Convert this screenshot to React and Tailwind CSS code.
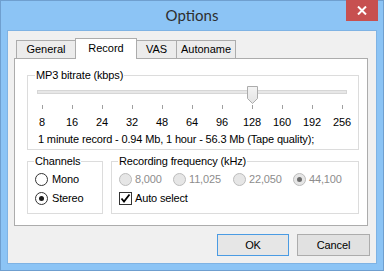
import React from "react";

const Radio = ({ checked, disabled }) => (
  <span
    className={
      "w-[13px] h-[13px] rounded-full border flex items-center justify-center shrink-0 " +
      (disabled ? "border-[#bcbcbc] bg-[#e6e6e6]" : "border-[#333333] bg-white")
    }
  >
    {checked && (
      <span className={"w-[5px] h-[5px] rounded-full " + (disabled ? "bg-[#6d6d6d]" : "bg-[#1a1a1a]")} />
    )}
  </span>
);

const labels = ["8", "16", "24", "32", "48", "64", "96", "128", "160", "192", "256"];

export default function App() {
  return (
    <div className="w-[384px] h-[271px] bg-[#8cc4f5] border border-[#6f9fcf] flex flex-col font-['Liberation_Sans',Arial,sans-serif] text-[11px] tracking-[-0.15px] text-black">
      <div className="relative h-[29px] flex items-center justify-center">
        <span className="font-['Lato',sans-serif] text-[15px] tracking-normal text-[#2e2e2e] leading-none">Options</span>
        <div className="absolute top-[-1px] right-[5px] w-[32px] h-[21px] bg-[#c75050] flex items-center justify-center">
          <svg width="10" height="9" viewBox="0 0 10 9">
            <path d="M1 0.5 L9 8.5 M9 0.5 L1 8.5" stroke="white" strokeWidth="2" />
          </svg>
        </div>
      </div>
      <div className="mx-[6px] h-[234px] border border-[#7fb3e4] bg-[#f0f0f0] flex flex-col px-[6px] pt-[7px]">
        <div className="flex items-start h-[20px] ml-[2px] tracking-normal">
          <div className="mt-[2px] h-[18px] w-[59px] border-t border-l border-[#acacac] bg-[#ececec] flex items-center justify-center leading-none">General</div>
          <div className="relative z-10 h-[21px] w-[62px] border-t border-l border-r border-[#acacac] bg-white flex items-start justify-center pt-[4px] leading-none">Record</div>
          <div className="mt-[2px] h-[18px] w-[40px] border-t border-r border-[#acacac] bg-[#ececec] flex items-center justify-center leading-none">VAS</div>
          <div className="mt-[2px] h-[18px] w-[59px] border-t border-r border-[#acacac] bg-[#ececec] flex items-center justify-center leading-none">Autoname</div>
        </div>
        <div className="w-[354px] h-[168px] border border-[#acacac] bg-white pl-[12px] flex flex-col">
          <fieldset className="mt-[10px] w-[332px] border border-[#dcdcdc] p-0 m-0 min-w-0 flex flex-col">
            <legend className="ml-[7px] px-[1px] leading-[13px]">MP3 bitrate (kbps)</legend>
            <div className="relative mt-[4px] h-[18px]">
              <div className="absolute left-[9px] top-[4px] w-[310px] h-[4px] border border-[#d6d6d6] bg-[#e7e7e7]" />
              <svg className="absolute left-[219px] top-0" width="11" height="18" viewBox="0 0 11 18">
                <defs>
                  <linearGradient id="tg" x1="0" y1="0" x2="0" y2="1">
                    <stop offset="0" stopColor="#f4f4f4" />
                    <stop offset="1" stopColor="#e3e3e3" />
                  </linearGradient>
                </defs>
                <path d="M0.5 0.5 H10.5 V12.5 L5.5 17.5 L0.5 12.5 Z" fill="url(#tg)" stroke="#acacac" />
              </svg>
            </div>
            <div className="flex mt-[1px] h-[4px]">
              {labels.map((l) => (
                <div key={l} className="w-[30px] pl-[14px]">
                  <div className="w-px h-[4px] bg-[#a0a0a0]" />
                </div>
              ))}
            </div>
            <div className="flex mt-[7px] -ml-px leading-[13px]">
              {labels.map((l) => (
                <div key={l} className="w-[30px] text-center">{l}</div>
              ))}
            </div>
            <div className="mt-[4px] pl-[10px] leading-[13px] pb-[3px]">
              1 minute record - 0.94 Mb, 1 hour - 56.3 Mb (Tape quality);
            </div>
          </fieldset>
          <div className="flex gap-[8px] mt-[5px]">
            <fieldset className="w-[76px] border border-[#dcdcdc] p-0 m-0 min-w-0 flex flex-col">
              <legend className="ml-[6px] px-[1px] leading-[13px]">Channels</legend>
              <div className="flex items-center gap-[4px] pl-[7px] h-[19px] mt-[2px]">
                <Radio />
                <span>Mono</span>
              </div>
              <div className="flex items-center gap-[4px] pl-[7px] h-[19px] mb-[5px]">
                <Radio checked />
                <span>Stereo</span>
              </div>
            </fieldset>
            <fieldset className="w-[248px] border border-[#dcdcdc] p-0 m-0 min-w-0 flex flex-col">
              <legend className="ml-[6px] px-[1px] leading-[13px]">Recording frequency (kHz)</legend>
              <div className="flex items-center pl-[7px] h-[19px] mt-[2px] text-[#8d8d8d]">
                <div className="w-[54px] flex items-center gap-[3px]"><Radio disabled /><span>8,000</span></div>
                <div className="w-[60px] flex items-center gap-[3px]"><Radio disabled /><span>11,025</span></div>
                <div className="w-[60px] flex items-center gap-[3px]"><Radio disabled /><span>22,050</span></div>
                <div className="flex items-center gap-[3px]"><Radio disabled checked /><span>44,100</span></div>
              </div>
              <div className="flex items-center gap-[3px] pl-[7px] h-[19px] mb-[5px]">
                <span className="w-[13px] h-[13px] border border-[#333333] bg-white flex items-center justify-center">
                  <svg width="11" height="11" viewBox="0 0 11 11">
                    <path d="M1.5 5.5 L4 8.5 L9.5 1.5" stroke="#000" strokeWidth="1.8" fill="none" />
                  </svg>
                </span>
                <span>Auto select</span>
              </div>
            </fieldset>
          </div>
        </div>
        <div className="flex justify-end gap-[8px] mt-[8px]">
          <button className="w-[72px] h-[22px] border border-[#4a9be3] bg-[#e6e6e6] leading-none">OK</button>
          <button className="w-[73px] h-[22px] border border-[#acacac] bg-[#e1e1e1] leading-none">Cancel</button>
        </div>
      </div>
    </div>
  );
}
